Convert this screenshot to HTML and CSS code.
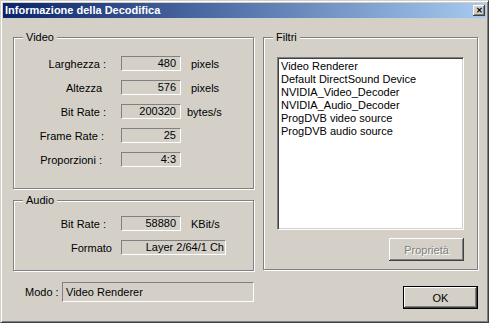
FILE: index.html
```html
<!DOCTYPE html>
<html lang="it">
<head>
  <meta charset="UTF-8">
  <title>Informazione della Decodifica</title>
  <link rel="stylesheet" href="styles.css">
</head>
<body>
  <div class="window">
    <div class="titlebar">
      <span class="title">Informazione della Decodifica</span>
      <span class="close">&#x2715;</span>
    </div>
    <div class="content">
      <div class="col-left">
        <div class="group video">
          <span class="legend">Video</span>
          <div class="row"><span class="label">Larghezza :</span><span class="field">480</span><span class="unit">pixels</span></div>
          <div class="row"><span class="label pad4">Altezza</span><span class="field">576</span><span class="unit">pixels</span></div>
          <div class="row"><span class="label">Bit Rate :</span><span class="field">200320</span><span class="unit shift">bytes/s</span></div>
          <div class="row"><span class="label pad2">Frame Rate :</span><span class="field">25</span></div>
          <div class="row"><span class="label pad4">Proporzioni :</span><span class="field">4:3</span></div>
        </div>
        <div class="group audio">
          <span class="legend">Audio</span>
          <div class="row"><span class="label">Bit Rate :</span><span class="field">58880</span><span class="unit">KBit/s</span></div>
          <div class="row"><span class="label neg6">Formato</span><span class="field long">Layer 2/64/1 Ch</span></div>
        </div>
        <div class="modo">
          <span class="modo-label">Modo :</span>
          <span class="field modo-field">Video Renderer</span>
        </div>
      </div>
      <div class="col-right">
        <div class="group filtri">
          <span class="legend">Filtri</span>
          <div class="listbox">
            <div class="item">Video Renderer</div>
            <div class="item">Default DirectSound Device</div>
            <div class="item">NVIDIA_Video_Decoder</div>
            <div class="item">NVIDIA_Audio_Decoder</div>
            <div class="item">ProgDVB video source</div>
            <div class="item">ProgDVB audio source</div>
          </div>
          <div class="btn-row"><button class="btn disabled">Proprietà</button></div>
        </div>
        <div class="btn-row ok-row"><button class="btn default">OK</button></div>
      </div>
    </div>
  </div>
</body>
</html>
```

FILE: styles.css
```css
html, body {
  margin: 0;
  padding: 0;
  background: #d4d0c8;
  font-family: "Liberation Sans", Arial, sans-serif;
  font-size: 11px;
  color: #000;
}

.window {
  box-sizing: border-box;
  width: 489px;
  height: 323px;
  border: 1px solid;
  border-color: #d4d0c8 #404040 #404040 #d4d0c8;
  box-shadow: inset 1px 1px 0 #fff, inset -1px -1px 0 #808080;
  padding: 2px;
  display: flex;
  flex-direction: column;
}

.titlebar {
  height: 15px;
  background: linear-gradient(to right, #0a246a, #a6caf0);
  display: flex;
  align-items: center;
  justify-content: space-between;
  padding: 0 1px 0 2px;
}

.title {
  color: #fff;
  font-weight: bold;
  font-size: 11px;
  line-height: 15px;
}

.close {
  box-sizing: border-box;
  width: 12px;
  height: 11px;
  background: #d4d0c8;
  box-shadow: inset -1px -1px 0 #404040, inset 1px 1px 0 #fff, inset -2px -2px 0 #808080;
  font-size: 8px;
  line-height: 11px;
  text-align: center;
  font-weight: bold;
}

.content {
  display: flex;
  gap: 9px;
  padding: 19px 0 0 10px;
}

.col-left {
  width: 241px;
  display: flex;
  flex-direction: column;
}

.col-right {
  width: 215px;
  display: flex;
  flex-direction: column;
}

/* etched group box */
.group {
  position: relative;
  box-sizing: border-box;
  border: 1px solid #808080;
  box-shadow: inset 1px 1px 0 #fff, 1px 1px 0 #fff;
}

.legend {
  position: absolute;
  top: -8px;
  left: 9px;
  padding: 0 3px;
  background: #d4d0c8;
  line-height: 14px;
}

.video {
  height: 152px;
  padding-top: 18px;
  display: flex;
  flex-direction: column;
  gap: 9px;
}

.audio {
  height: 71px;
  margin-top: 11px;
  padding-top: 15px;
  display: flex;
  flex-direction: column;
  gap: 9px;
}

.row {
  display: flex;
  align-items: center;
  height: 15px;
}

.label {
  box-sizing: border-box;
  width: 92px;
  text-align: right;
  margin-right: 15px;
}

.label.pad2 { padding-right: 2px; }
.label.pad4 { padding-right: 4px; }
.label.neg6 { margin-right: 9px; width: 98px; }

.field {
  box-sizing: border-box;
  height: 15px;
  width: 60px;
  border: 1px solid;
  border-color: #808080 #fff #fff #808080;
  text-align: right;
  padding-right: 4px;
  line-height: 13px;
  white-space: nowrap;
  overflow: hidden;
}

.field.long {
  width: 105px;
  padding-right: 1px;
}

.unit {
  margin-left: 10px;
}

.unit.shift {
  margin-left: 6px;
}

.modo {
  display: flex;
  align-items: center;
  margin-top: 11px;
}

.modo-label {
  margin-left: 12px;
  width: 37px;
}

.modo-field {
  width: 192px;
  height: 20px;
  text-align: left;
  padding-left: 3px;
  line-height: 18px;
}

.filtri {
  height: 233px;
  padding: 19px 13px 8px 13px;
}

.listbox {
  box-sizing: border-box;
  height: 173px;
  background: #fff;
  border: 1px solid;
  border-color: #808080 #fff #fff #808080;
  box-shadow: inset 1px 1px 0 #404040, inset -1px -1px 0 #d4d0c8;
  padding: 2px 3px;
}

.item {
  line-height: 13px;
  white-space: nowrap;
}

.btn-row {
  display: flex;
  justify-content: flex-end;
  margin-top: 8px;
}

.ok-row {
  margin-top: 16px;
}

.btn {
  box-sizing: border-box;
  width: 75px;
  height: 23px;
  border: none;
  background: #d4d0c8;
  font-family: "Liberation Sans", Arial, sans-serif;
  font-size: 11px;
  color: #000;
  padding: 0;
  box-shadow: inset -1px -1px 0 #404040, inset 1px 1px 0 #fff, inset -2px -2px 0 #808080;
}

.btn.disabled {
  color: #808080;
  text-shadow: 1px 1px 0 #fff;
}

.btn.default {
  border: 1px solid #000;
}
```
